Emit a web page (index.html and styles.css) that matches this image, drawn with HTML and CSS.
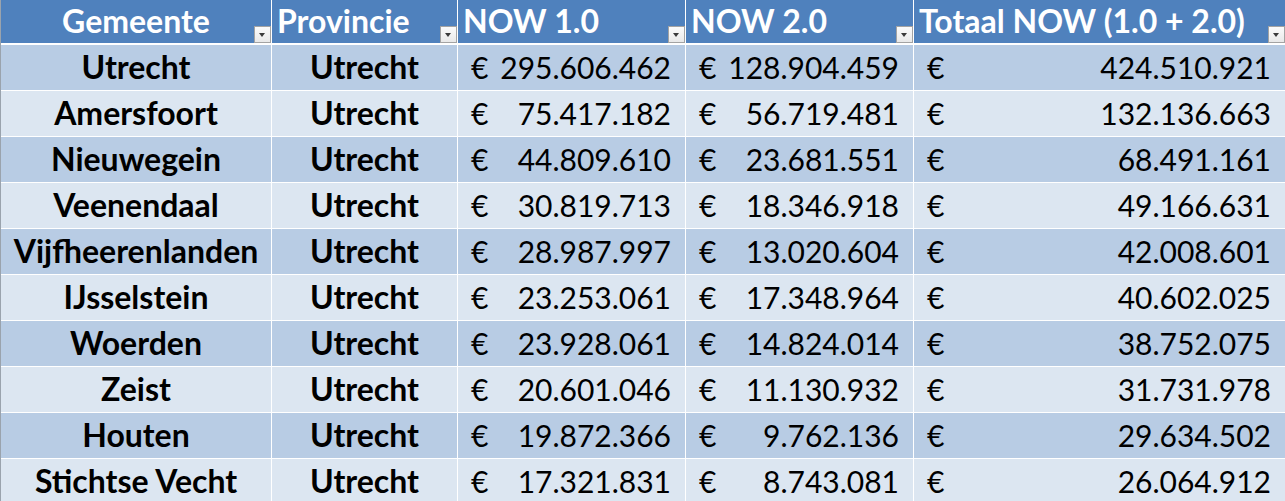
FILE: index.html
```html
<!DOCTYPE html>
<html lang="nl">
<head>
<meta charset="utf-8">
<title>NOW per gemeente</title>
<link rel="stylesheet" href="styles.css">
</head>
<body>
<div class="sheet">
  <div class="grid">
    <div class="hd center">Gemeente<span class="flt"></span></div>
    <div class="hd">Provincie<span class="flt"></span></div>
    <div class="hd">NOW 1.0<span class="flt"></span></div>
    <div class="hd">NOW 2.0<span class="flt"></span></div>
    <div class="hd">Totaal NOW (1.0 + 2.0)<span class="flt"></span></div>

    <div class="c name dark">Utrecht</div><div class="c name dark">Utrecht</div>
    <div class="c num dark"><span>€</span><span>295.606.462</span></div>
    <div class="c num dark"><span>€</span><span>128.904.459</span></div>
    <div class="c num dark"><span>€</span><span>424.510.921</span></div>

    <div class="c name light">Amersfoort</div><div class="c name light">Utrecht</div>
    <div class="c num light"><span>€</span><span>75.417.182</span></div>
    <div class="c num light"><span>€</span><span>56.719.481</span></div>
    <div class="c num light"><span>€</span><span>132.136.663</span></div>

    <div class="c name dark">Nieuwegein</div><div class="c name dark">Utrecht</div>
    <div class="c num dark"><span>€</span><span>44.809.610</span></div>
    <div class="c num dark"><span>€</span><span>23.681.551</span></div>
    <div class="c num dark"><span>€</span><span>68.491.161</span></div>

    <div class="c name light">Veenendaal</div><div class="c name light">Utrecht</div>
    <div class="c num light"><span>€</span><span>30.819.713</span></div>
    <div class="c num light"><span>€</span><span>18.346.918</span></div>
    <div class="c num light"><span>€</span><span>49.166.631</span></div>

    <div class="c name dark">Vijfheerenlanden</div><div class="c name dark">Utrecht</div>
    <div class="c num dark"><span>€</span><span>28.987.997</span></div>
    <div class="c num dark"><span>€</span><span>13.020.604</span></div>
    <div class="c num dark"><span>€</span><span>42.008.601</span></div>

    <div class="c name light">IJsselstein</div><div class="c name light">Utrecht</div>
    <div class="c num light"><span>€</span><span>23.253.061</span></div>
    <div class="c num light"><span>€</span><span>17.348.964</span></div>
    <div class="c num light"><span>€</span><span>40.602.025</span></div>

    <div class="c name dark">Woerden</div><div class="c name dark">Utrecht</div>
    <div class="c num dark"><span>€</span><span>23.928.061</span></div>
    <div class="c num dark"><span>€</span><span>14.824.014</span></div>
    <div class="c num dark"><span>€</span><span>38.752.075</span></div>

    <div class="c name light">Zeist</div><div class="c name light">Utrecht</div>
    <div class="c num light"><span>€</span><span>20.601.046</span></div>
    <div class="c num light"><span>€</span><span>11.130.932</span></div>
    <div class="c num light"><span>€</span><span>31.731.978</span></div>

    <div class="c name dark">Houten</div><div class="c name dark">Utrecht</div>
    <div class="c num dark"><span>€</span><span>19.872.366</span></div>
    <div class="c num dark"><span>€</span><span>9.762.136</span></div>
    <div class="c num dark"><span>€</span><span>29.634.502</span></div>

    <div class="c name light">Stichtse Vecht</div><div class="c name light">Utrecht</div>
    <div class="c num light"><span>€</span><span>17.321.831</span></div>
    <div class="c num light"><span>€</span><span>8.743.081</span></div>
    <div class="c num light"><span>€</span><span>26.064.912</span></div>
  </div>
</div>
</body>
</html>
```
FILE: styles.css
```css
html, body {
  margin: 0;
  padding: 0;
  background: #ffffff;
  overflow: hidden;
}

.sheet {
  width: 1285px;
  height: 501px;
  overflow: hidden;
}

.grid {
  display: grid;
  grid-template-columns: 270px 185px 227px 227px 371px;
  grid-template-rows: 44px;
  grid-auto-rows: 45px;
  column-gap: 1px;
  row-gap: 1px;
  background: #ffffff;
  border-left: 1px solid #9aa3ad;
  width: max-content;
  font-family: Lato, "Open Sans", sans-serif;
  font-size: 30px;
  color: #000000;
}

.hd {
  position: relative;
  box-sizing: border-box;
  height: 44px;
  background: #4f81bd;
  color: #ffffff;
  font-weight: 700;
  font-size: 32px;
  line-height: 42px;
  border-bottom: 1px solid #ffffff;
  padding-left: 5px;
  white-space: nowrap;
}

.hd.center {
  text-align: center;
  padding-left: 0;
}

.flt {
  position: absolute;
  right: 0;
  bottom: 0;
  width: 15px;
  height: 15px;
  border: 1px solid #a3a3a3;
  background: linear-gradient(#fbfbfb, #e9e9e9);
}

.flt::after {
  content: "";
  position: absolute;
  left: 4px;
  top: 6px;
  border-left: 3.5px solid transparent;
  border-right: 3.5px solid transparent;
  border-top: 4px solid #3a3a3a;
}

.c {
  line-height: 45px;
  white-space: nowrap;
}

.dark { background: #b8cce4; }
.light { background: #dce6f1; }

.name {
  font-weight: 700;
  font-size: 32px;
  line-height: 44px;
  text-align: center;
}

.num {
  display: flex;
  justify-content: space-between;
  padding: 0 14px 0 13px;
}
```
